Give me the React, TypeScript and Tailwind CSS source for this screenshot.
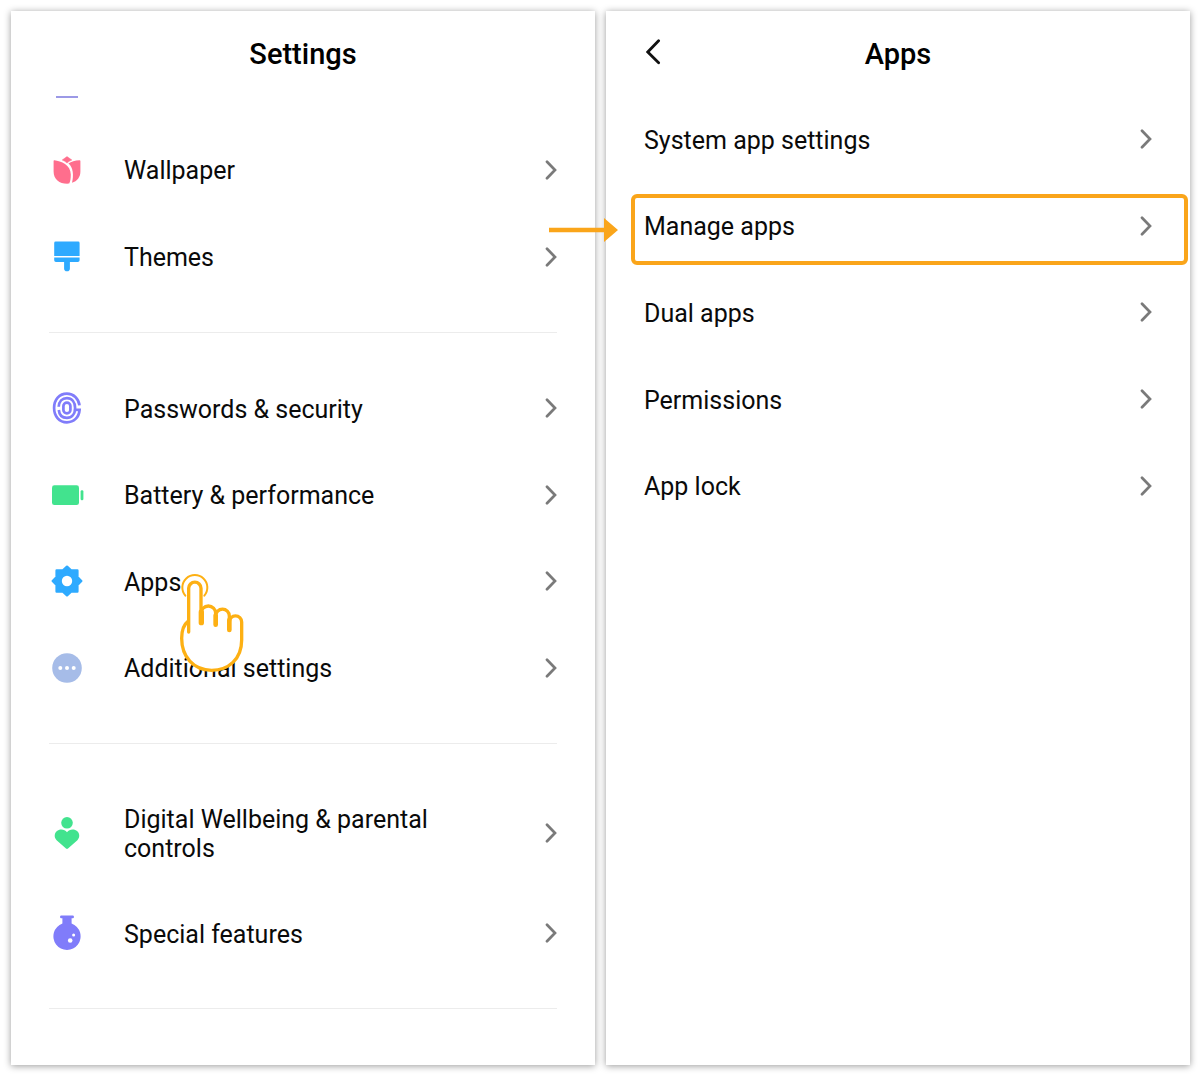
import type { ReactNode } from "react";

function Chevron() {
  return (
    <svg className="h-5 w-3 shrink-0" viewBox="0 0 12 20" fill="none" aria-hidden="true">
      <path d="M2 1.800 10 10l-8 8.200" stroke="#7a7a7a" strokeWidth="2.700" strokeLinecap="round" strokeLinejoin="miter" />
    </svg>
  );
}

function Icon({ children }: { children: ReactNode }) {
  return (
    <svg className="-my-1 size-9 shrink-0" viewBox="0 0 36 36" aria-hidden="true">
      {children}
    </svg>
  );
}

const tulip = (
  <Icon>
    <g fill="#ff6e8d">
      <path d="M18 4.600 22.900 8Q19.900 9.200 18 11 16.200 9.200 13.200 8Z" stroke="#ff6e8d" strokeWidth="0.500" strokeLinejoin="round" />
      <path d="M4.600 8.900Q4.600 8.200 5.300 8.300C12 9 21.800 13 21.800 22.600 21.800 26.300 21.400 29.600 20.200 31.600 11.200 32.400 4.600 27.600 4.600 19.400Z" />
      <path d="M19.400 11.600C22.200 9.400 26 8.600 30.600 8.300Q31.400 8.300 31.400 9V19.400C31.400 25 28.200 29 23 30.800 24.900 23.600 24.200 15.200 19.400 11.600Z" />
    </g>
  </Icon>
);

const brush = (
  <Icon>
    <g fill="#2eaaff">
      <path d="M6.600 2.600H29.200Q30.600 2.600 30.600 4V17H5.200V4Q5.200 2.600 6.600 2.600Z" />
      <path d="M5.200 18.400H30.600V21.200Q30.600 23 28.800 23H20.900V29.400Q20.900 32.200 18 32.200 15.100 32.200 15.100 29.400V23H7Q5.200 23 5.200 21.200Z" />
    </g>
  </Icon>
);

const fingerprint = (
  <Icon>
    <g fill="none" stroke="#807cfa" strokeWidth="2.700" strokeLinecap="butt">
      <path d="M30.500 15.400C29.600 8.400 24.600 3.700 17.900 3.700 10.400 3.700 5.100 9.600 5.100 18S10.400 32.300 17.900 32.300C24.800 32.300 30 27.400 30.600 19.800H27" />
      <path d="M9.700 16.800C10 11.400 13.200 8.100 17.900 8.100 22.800 8.100 26.100 12 26.100 18S22.800 27.900 17.900 27.900C13.400 27.900 10.300 24.900 9.800 20" />
      <rect x="14.400" y="12.600" width="7" height="10.800" rx="3.500" />
    </g>
  </Icon>
);

const battery = (
  <Icon>
    <g fill="#42e38e">
      <rect x="3" y="8.300" width="27" height="19.800" rx="2.400" />
      <rect x="31.600" y="13.200" width="2.800" height="10" rx="1.300" />
    </g>
  </Icon>
);

const gear = (
  <Icon>
    <path
      fill="#2eaaff"
      stroke="#2eaaff"
      strokeWidth="2.400"
      strokeLinejoin="round"
      d="M18 3.700 22 7.400H28.400V14L32.300 18 28.400 22V28.600H22L18 32.300 14 28.600H7.600V22L3.700 18 7.600 14V7.400H14Z"
    />
    <circle cx="18" cy="18" r="5.200" fill="#fff" />
  </Icon>
);

const dots = (
  <Icon>
    <circle cx="18" cy="18" r="14.800" fill="#a6bce8" />
    <g fill="#fff">
      <circle cx="11.300" cy="18" r="2" />
      <circle cx="18" cy="18" r="2" />
      <circle cx="24.700" cy="18" r="2" />
    </g>
  </Icon>
);

const wellbeing = (
  <Icon>
    <g fill="#42e38e">
      <circle cx="18" cy="7.800" r="5.800" />
      <path d="M18 17.200C20 14.600 23.400 14 26.200 15 30.600 16.800 31.600 21.800 28.400 25.200L19 33.600Q18 34.500 17 33.600L7.600 25.200C4.400 21.800 5.400 16.800 9.800 15 12.600 14 16 14.600 18 17.200Z" />
    </g>
  </Icon>
);

const flask = (
  <Icon>
    <path
      fill="#807cfa"
      d="M12.200 0.500H23.800Q24.900 0.500 24.900 1.600V2.200Q24.900 3.300 23.800 3.300H22.600V8.500A13.600 13.600 0 1 1 13.400 8.500V3.300H12.200Q11.100 3.300 11.100 2.200V1.600Q11.100 0.500 12.200 0.500Z"
    />
    <circle cx="24.600" cy="19.900" r="1.500" fill="#fff" />
    <circle cx="21.200" cy="25.500" r="2.300" fill="#fff" />
  </Icon>
);

function Row({ icon, label, children }: { icon?: ReactNode; label: string; children?: ReactNode }) {
  return (
    <li className="relative flex min-h-[86px]">
      <button type="button" className="flex grow items-center gap-[39px] py-[27px] text-left">
        {icon}
        <span className="grow">
          <span className="block max-w-80 pt-0.5">{label}</span>
        </span>
        <Chevron />
      </button>
      {children}
    </li>
  );
}

function TapHand() {
  return (
    <svg className="pointer-events-none absolute top-[33px] left-32 z-10 w-17" viewBox="411 45 204 306" fill="none" stroke="#fdb013" aria-hidden="true">
      <path
        fill="#fff"
        stroke="none"
        d="M446 195V97A18.500 18.500 0 0 1 483 97V170A22 22 0 0 1 527 172V180A20.500 20.500 0 0 1 568 180V198A18.500 18.500 0 0 1 605 198V252C605 310 565 343 515 343 460 343 425 302 425 247 425 225 432 205 446 195Z"
      />
      <path strokeWidth="6" strokeLinecap="round" d="M436 119A37.500 37.500 0 1 1 493 119" />
      <g strokeWidth="10" strokeLinecap="round" strokeLinejoin="round">
        <path d="M446 228V97A18.500 18.500 0 0 1 483 97V170" />
        <path d="M483 172A22 22 0 0 1 527 172V180A20.500 20.500 0 0 1 568 180V198A18.500 18.500 0 0 1 605 198V252C605 310 565 343 515 343 460 343 425 302 425 247 425 225 432 205 444 196" />
      </g>
      <path strokeWidth="16" strokeLinecap="round" d="M484 168V200" />
      <path strokeWidth="14" strokeLinecap="round" d="M527 178V206M568 192V222" />
    </svg>
  );
}

function Arrow() {
  return (
    <svg className="pointer-events-none absolute top-[35px] -left-24 z-10 h-6 w-[70px]" viewBox="0 0 70 24" fill="#faa51a" aria-hidden="true">
      <path d="M1 9.800H56V0L70 12 56 24V14.200H1Z" />
    </svg>
  );
}

function Divider() {
  return <hr className="my-8 border-t border-[#ececec]" />;
}

const panel = "min-w-0 flex-1 bg-white px-[38px] shadow-[0_1px_7px_rgba(0,0,0,0.4)]";

export default function App() {
  return (
    <main className="flex min-h-screen gap-[11px] bg-white pt-[11px] pr-2.5 pb-[11px] pl-[11px] font-['Roboto',sans-serif] text-[25px] leading-[29px] text-[#0a0a0a]">
      <section className={panel} aria-label="Settings">
        <header className="flex h-[85px] items-center justify-center">
          <h1 className="text-[29px] leading-8 font-medium text-black">Settings</h1>
        </header>
        <div className="ml-[7px] h-[2px] w-[22px] bg-[#9c99e6]" />
        <ul className="mt-7 grid min-h-[174px] auto-rows-fr">
          <Row icon={tulip} label="Wallpaper" />
          <Row icon={brush} label="Themes" />
        </ul>
        <Divider />
        <ul className="grid min-h-[346px] auto-rows-fr">
          <Row icon={fingerprint} label="Passwords & security" />
          <Row icon={battery} label="Battery & performance" />
          <Row icon={gear} label="Apps">
            <TapHand />
          </Row>
          <Row icon={dots} label="Additional settings" />
        </ul>
        <Divider />
        <ul>
          <Row icon={wellbeing} label="Digital Wellbeing & parental controls" />
          <Row icon={flask} label="Special features" />
        </ul>
        <Divider />
      </section>

      <section className={panel} aria-label="Apps">
        <header className="relative flex h-[85px] items-center justify-center">
          <button type="button" aria-label="Back" className="absolute top-[25px] left-0 p-0.5">
            <svg className="h-7 w-4" viewBox="0 0 16 28" fill="none" aria-hidden="true">
              <path d="M12.600 2.800 1.800 14l10.800 10.700" stroke="#111" strokeWidth="2.800" strokeLinecap="round" />
            </svg>
          </button>
          <h2 className="text-[29px] leading-8 font-medium text-black">Apps</h2>
        </header>
        <ul className="grid min-h-[433px] auto-rows-fr">
          <Row label="System app settings" />
          <Row label="Manage apps">
            <span className="pointer-events-none absolute top-[11px] -right-9 bottom-1 -left-[13px] rounded-md border-4 border-[#faa51a]" />
            <Arrow />
          </Row>
          <Row label="Dual apps" />
          <Row label="Permissions" />
          <Row label="App lock" />
        </ul>
      </section>
    </main>
  );
}
